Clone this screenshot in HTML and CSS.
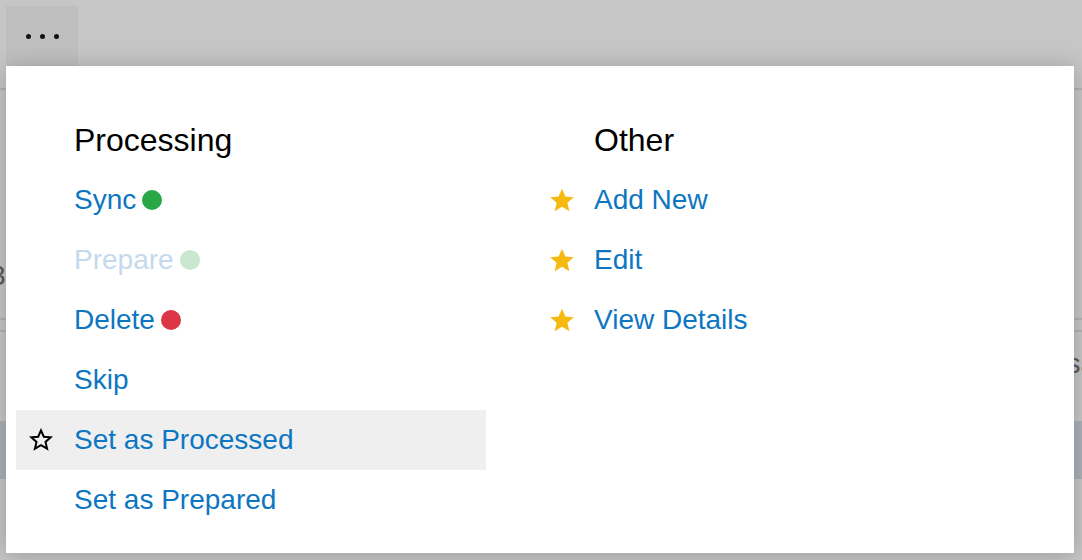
FILE: index.html
```html
<!DOCTYPE html>
<html>
<head>
<meta charset="utf-8">
<link rel="stylesheet" href="styles.css">
</head>
<body>
<div class="page">
  <div class="toolbar">
    <div class="more-btn"><span class="dot"></span><span class="dot"></span><span class="dot"></span></div>
  </div>
  <div class="table">
    <div class="row r1"><span class="cell-left">3</span></div>
    <div class="row r2"></div>
    <div class="row r3"><span class="cell-right">sa</span></div>
    <div class="row r4"></div>
  </div>

  <div class="menu">
    <div class="col">
      <div class="heading">Processing</div>
      <div class="item"><span class="slot"></span><span class="label">Sync</span><span class="status green"></span></div>
      <div class="item disabled"><span class="slot"></span><span class="label">Prepare</span><span class="status green-faded"></span></div>
      <div class="item"><span class="slot"></span><span class="label">Delete</span><span class="status red"></span></div>
      <div class="item"><span class="slot"></span><span class="label">Skip</span></div>
      <div class="item active"><span class="slot"><svg class="star-outline" viewBox="0 0 24 24" width="24" height="24"><path d="M12 2.4l2.8 6.3 6.9.6-5.2 4.6 1.6 6.8L12 17.1l-6.1 3.6 1.6-6.8-5.2-4.6 6.9-.6z" fill="none" stroke="#000" stroke-width="2" stroke-linejoin="miter"/></svg></span><span class="label">Set as Processed</span></div>
      <div class="item"><span class="slot"></span><span class="label">Set as Prepared</span></div>
    </div>
    <div class="col">
      <div class="heading">Other</div>
      <div class="item"><span class="slot"><svg class="star" viewBox="0 0 24 24" width="28" height="27"><path d="M12 1.5l3 6.9 7.5.7-5.7 5 1.7 7.4L12 17.6l-6.5 3.9 1.7-7.4-5.7-5 7.5-.7z" fill="#f6b90f"/></svg></span><span class="label">Add New</span></div>
      <div class="item"><span class="slot"><svg class="star" viewBox="0 0 24 24" width="28" height="27"><path d="M12 1.5l3 6.9 7.5.7-5.7 5 1.7 7.4L12 17.6l-6.5 3.9 1.7-7.4-5.7-5 7.5-.7z" fill="#f6b90f"/></svg></span><span class="label">Edit</span></div>
      <div class="item"><span class="slot"><svg class="star" viewBox="0 0 24 24" width="28" height="27"><path d="M12 1.5l3 6.9 7.5.7-5.7 5 1.7 7.4L12 17.6l-6.5 3.9 1.7-7.4-5.7-5 7.5-.7z" fill="#f6b90f"/></svg></span><span class="label">View Details</span></div>
    </div>
  </div>
</div>
</body>
</html>
```

FILE: styles.css
```css
* { box-sizing: border-box; }
html, body { margin: 0; padding: 0; }
body {
  width: 1082px;
  height: 560px;
  overflow: hidden;
  background: #c6c6c6;
  font-family: "Liberation Sans", Arial, sans-serif;
}
.page {
  position: relative;
  width: 1082px;
  height: 560px;
}
.toolbar {
  height: 90px;
  padding: 6px 0 0 6px;
  border-bottom: 2px solid #b3b3b3;
}
.more-btn {
  width: 72px;
  height: 60px;
  background: #bfbfbf;
  display: flex;
  align-items: center;
  justify-content: center;
  gap: 9px;
}
.more-btn .dot {
  width: 5px;
  height: 5px;
  border-radius: 50%;
  background: #111;
}
.table .row {
  display: flex;
  color: #5a5a5a;
  font-size: 28px;
}
.r1 {
  height: 230px;
  border-bottom: 2px solid #b3b3b3;
  padding-top: 170px;
}
.r1 .cell-left { margin-left: -10px; }
.r2 {
  height: 12px;
  border-bottom: 2px solid #b3b3b3;
}
.r3 {
  height: 89px;
  justify-content: flex-end;
  padding-top: 16px;
}
.r3 .cell-right { margin-right: -14px; }
.r4 {
  height: 58px;
  background: #aab1ba;
}
.menu {
  position: absolute;
  left: 6px;
  top: 66px;
  width: 1068px;
  height: 487px;
  background: #fff;
  box-shadow: 0 2px 22px rgba(0, 0, 0, 0.22);
  padding: 44px 0 0 10px;
  display: grid;
  grid-template-columns: 470px 470px;
  column-gap: 50px;
  align-content: start;
}
.col {
  display: flex;
  flex-direction: column;
}
.heading {
  height: 60px;
  line-height: 60px;
  padding-left: 58px;
  font-size: 32px;
  color: #000;
}
.item {
  height: 60px;
  display: flex;
  align-items: center;
  font-size: 28px;
  color: #0d76c2;
}
.item.active { background: #efefef; }
.item.disabled { color: #c4d9ee; }
.slot {
  width: 58px;
  height: 60px;
  display: flex;
  align-items: center;
  padding-left: 13px;
  flex: none;
}
.star { margin-left: -1px; }
.label { line-height: 60px; }
.status {
  width: 20px;
  height: 20px;
  border-radius: 50%;
  margin-left: 6px;
}
.green { background: #27a745; }
.green-faded { background: #c9e7cf; }
.red { background: #dc3545; }
```
